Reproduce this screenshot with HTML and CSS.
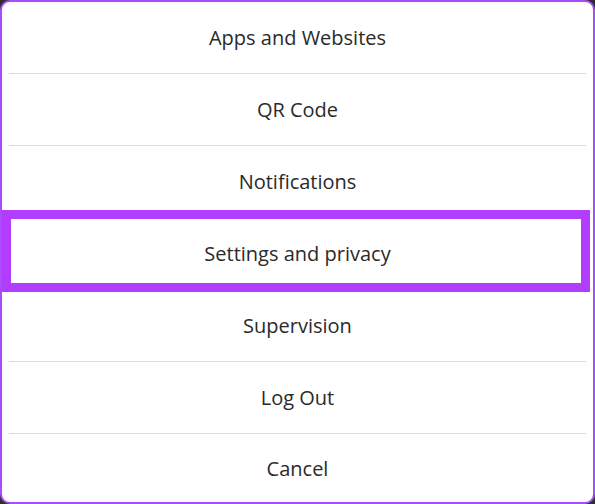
FILE: index.html
```html
<!DOCTYPE html>
<html lang="en">
<head>
    <meta charset="UTF-8">
    <meta name="viewport" content="width=device-width, initial-scale=1.0">
    <title>Menu</title>
    <link rel="stylesheet" href="styles.css">
</head>
<body>
    <div class="sheet">
        <ul class="menu">
            <li class="menu-item">Apps and Websites</li>
            <li class="menu-item">QR Code</li>
            <li class="menu-item">Notifications</li>
            <!-- highlighted option -->
            <li class="menu-item selected">Settings and privacy</li>
            <li class="menu-item">Supervision</li>
            <li class="menu-item">Log Out</li>
            <li class="menu-item last">Cancel</li>
        </ul>
    </div>
</body>
</html>
```

FILE: styles.css
```css
:root {
    --purple: #a94dfb;
    --highlight: #b33dff;
    --text: #2a2a2a;
    --line: #dbdbdb;
}

body {
    margin: 0;
    padding: 0;
    background-color: #2e2e2e;
    font-family: 'Open Sans', 'Noto Sans', sans-serif;
}

.sheet {
    width: 595px;
    height: 504px;
    box-sizing: border-box;
    border: 2px solid var(--purple);
    border-radius: 10px;
    background-color: white;
    overflow: hidden;
}

.menu {
    list-style: none;
    margin: 0;
    padding: 0;
}

.menu-item {
    position: relative;
    height: 71px;
    margin: 0 7px;
    border-bottom: 1px solid var(--line);
    display: flex;
    align-items: center;
    justify-content: center;
    font-size: 20px;
    color: var(--text);
}

.menu-item.last {
    border-bottom: none;
    height: 68px;
}

.selected::after {
    content: '';
    position: absolute;
    top: -8px;
    left: -7px;
    right: -4px;
    height: 82px;
    box-sizing: border-box;
    border: 9px solid var(--highlight);
}
```
